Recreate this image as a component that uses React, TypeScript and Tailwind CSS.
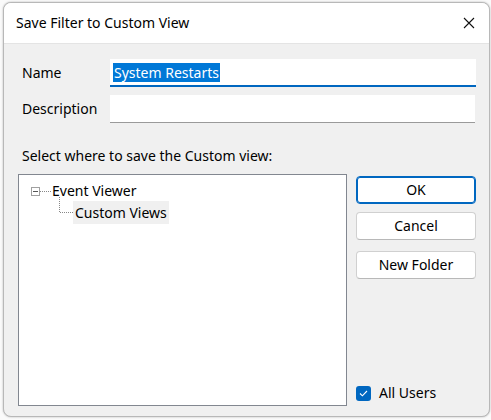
import React from "react";

export default function App() {
  return (
    <div className="w-[491px] h-[420px] bg-[#fafafa] relative overflow-hidden" style={{ fontFamily: '"Noto Sans", "Open Sans", sans-serif' }}>
      <div className="absolute left-[3px] top-[2px] w-[487px] h-[415px] rounded-[8px] border border-[#b8b8b8] bg-[#f0f0f0] overflow-hidden flex flex-col shadow-[0_0_2px_rgba(0,0,0,0.3)]">
        <div className="h-[41px] bg-white border-b border-[#e4e4e4] flex items-center justify-between pl-[12px] pr-[13px] shrink-0">
          <span className="text-[14px] leading-[18px] text-black">Save Filter to Custom View</span>
          <svg width="12" height="12" viewBox="0 0 12 12" className="mr-[1px]">
            <path d="M1 1L11 11M11 1L1 11" stroke="#111" strokeWidth="1.1" />
          </svg>
        </div>
        <div className="flex-1 flex flex-col pl-[14px] pr-[13px] pt-[15px] text-[14px] leading-[18px] text-black">
          <div className="flex items-center h-[28px]">
            <span className="w-[92px] pl-[4px]">Name</span>
            <div className="flex-1 h-[28px] bg-white border-b-2 border-[#0067c0] flex items-center pl-[3px]">
              <span className="bg-[#0078d7] text-white px-[1px] leading-[19px]">System Restarts</span>
            </div>
          </div>
          <div className="flex items-center h-[28px] mt-[8px]">
            <span className="w-[92px] pl-[4px]">Description</span>
            <div className="flex-1 h-[28px] bg-white border-b border-[#9a9a9a] mr-[1px]"></div>
          </div>
          <div className="mt-[24px] pl-[4px] leading-[18px]">Select where to save the Custom view:</div>
          <div className="flex mt-[9px] flex-1 pb-[10px]">
            <div className="w-[329px] bg-white border border-[#828790] pt-[6px] pl-[12px]">
              <div className="flex items-center h-[20px]">
                <svg width="20" height="9" viewBox="0 0 20 9">
                  <rect x="0.5" y="0.5" width="8" height="8" fill="#fff" stroke="#a0a0a0" />
                  <path d="M2 4.5H7" stroke="#555" />
                  <path d="M9 4.5H20" stroke="#888" strokeDasharray="1 1" />
                </svg>
                <span className="ml-[1px]">Event Viewer</span>
              </div>
              <div className="flex items-center h-[23px] ml-[28px]">
                <svg width="14" height="23" viewBox="0 0 14 23" className="self-start -mt-[4px]">
                  <path d="M0.5 0V15.5" stroke="#888" strokeDasharray="1 1" />
                  <path d="M1 15.5H14" stroke="#888" strokeDasharray="1 1" />
                </svg>
                <span className="bg-[#f0f0f0] h-[23px] px-[2px] flex items-center">Custom Views</span>
              </div>
            </div>
            <div className="flex-1 flex flex-col items-end">
              <button className="w-[120px] h-[28px] mt-[2px] bg-white border border-[#0067c0] rounded-[4px] text-[14px] shadow-[inset_0_0_0_1px_#0067c0]">OK</button>
              <button className="w-[120px] h-[28px] mt-[8px] bg-white border border-[#d0d0d0] rounded-[4px] text-[14px] border-b-[#b8b8b8]">Cancel</button>
              <button className="w-[120px] h-[28px] mt-[11px] bg-white border border-[#d0d0d0] rounded-[4px] text-[14px] border-b-[#b8b8b8]">New Folder</button>
              <div className="flex-1"></div>
              <div className="w-[120px] flex items-center mb-[4px]">
                <div className="w-[15px] h-[15px] rounded-[3px] bg-[#0067c0] flex items-center justify-center">
                  <svg width="9" height="7" viewBox="0 0 9 7">
                    <path d="M1 3.5L3.4 5.8L8 1" stroke="#fff" strokeWidth="1.1" fill="none" />
                  </svg>
                </div>
                <span className="ml-[8px]">All Users</span>
              </div>
            </div>
          </div>
        </div>
      </div>
    </div>
  );
}
